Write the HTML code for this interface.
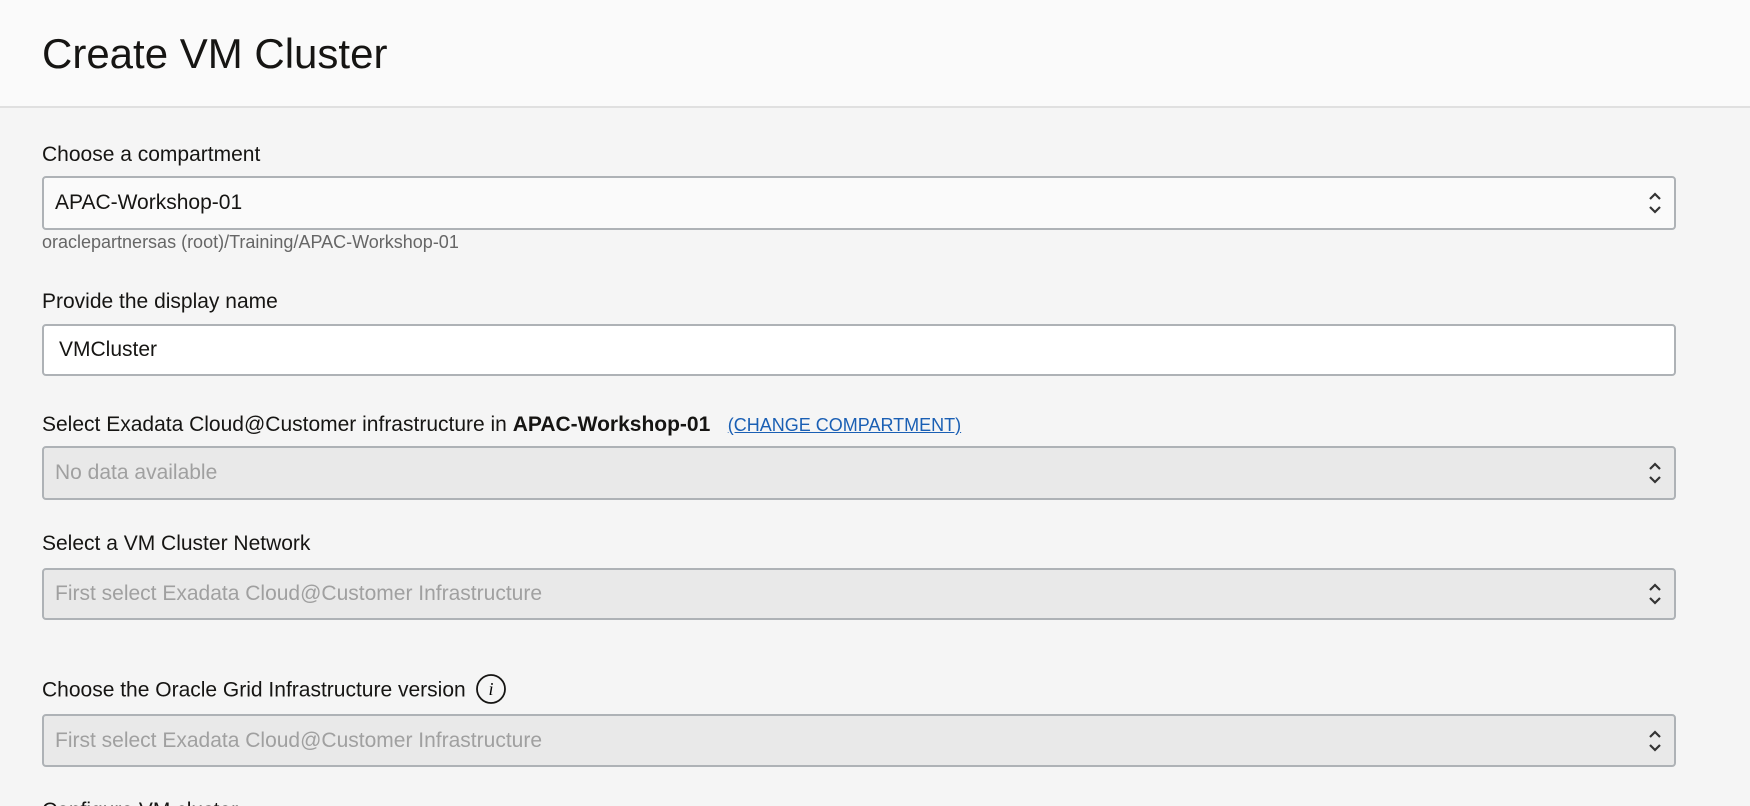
<!DOCTYPE html>
<html style="height:806px;overflow:hidden"><head><style>
body{margin:0;width:1750px;height:806px;overflow:hidden;background:#f5f5f5;font-family:"Liberation Sans",Arial,sans-serif;color:#161513;position:relative}
.hdr{position:absolute;left:0;top:0;width:1750px;height:106px;background:#fafafa;border-bottom:2px solid #e0e0e0}
.hdr h1{position:absolute;left:42px;top:30px;margin:0;font-weight:normal;font-size:42px;line-height:48px}
.lbl{position:absolute;left:42px;font-size:21px;line-height:26px;white-space:nowrap}
.box{position:absolute;left:42px;width:1634px;border:2px solid #aeb2b6;border-radius:4px;box-sizing:border-box;font-size:21px;padding-left:11px;display:flex;align-items:center}
.dis{background:#e9e9e9;color:#a0a0a0}
.arr{position:absolute;right:12px;top:50%;transform:translateY(-50%)}
.help{position:absolute;left:42px;top:232px;font-size:18px;color:#666}
a{color:#1a5fb4;text-decoration:underline}
</style></head><body>
<div class="hdr"><h1>Create VM Cluster</h1></div>
<div class="lbl" style="top:142px">Choose a compartment</div>
<div class="box" style="top:176px;height:54px;background:#fafafa"><span>APAC-Workshop-01</span>
<svg class="arr" width="14" height="26" viewBox="0 0 14 26"><path d="M2 9L7 4L12 9M2 17L7 22L12 17" fill="none" stroke="#333" stroke-width="2.2"/></svg></div>
<div class="help">oraclepartnersas (root)/Training/APAC-Workshop-01</div>
<div class="lbl" style="top:289px">Provide the display name</div>
<div class="box" style="top:324px;height:52px;background:#fff;padding-left:15px"><span>VMCluster</span></div>
<div class="lbl" style="top:412px">Select Exadata Cloud@Customer infrastructure in <b>APAC-Workshop-01</b> &nbsp; <a style="font-size:18px">(CHANGE COMPARTMENT)</a></div>
<div class="box dis" style="top:446px;height:54px"><span>No data available</span>
<svg class="arr" width="14" height="26" viewBox="0 0 14 26"><path d="M2 9L7 4L12 9M2 17L7 22L12 17" fill="none" stroke="#333" stroke-width="2.2"/></svg></div>
<div class="lbl" style="top:531px">Select a VM Cluster Network</div>
<div class="box dis" style="top:568px;height:52px"><span>First select Exadata Cloud@Customer Infrastructure</span>
<svg class="arr" width="14" height="26" viewBox="0 0 14 26"><path d="M2 9L7 4L12 9M2 17L7 22L12 17" fill="none" stroke="#333" stroke-width="2.2"/></svg></div>
<div class="lbl" style="top:677px">Choose the Oracle Grid Infrastructure version
<svg style="vertical-align:middle;margin-left:3px;margin-top:-4px" width="32" height="32" viewBox="0 0 32 32"><circle cx="16" cy="16" r="14" fill="none" stroke="#161513" stroke-width="1.8"/><text x="16" y="22" text-anchor="middle" font-family="Liberation Serif,serif" font-style="italic" font-size="18">i</text></svg></div>
<div class="box dis" style="top:714px;height:53px"><span>First select Exadata Cloud@Customer Infrastructure</span>
<svg class="arr" width="14" height="26" viewBox="0 0 14 26"><path d="M2 9L7 4L12 9M2 17L7 22L12 17" fill="none" stroke="#333" stroke-width="2.2"/></svg></div>
<div style="position:absolute;left:0;top:790px;width:600px;height:16px;overflow:hidden"><div class="lbl" style="top:8px">Configure VM cluster</div></div>
</body></html>
